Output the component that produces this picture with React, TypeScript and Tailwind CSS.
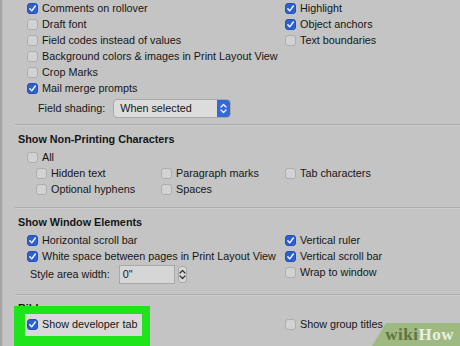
import React from 'react';

type Box = { label: string; on?: boolean };

const Check: React.FC<{ on?: boolean }> = ({ on }) =>
  on ? (
    <span className="w-[11px] h-[11px] shrink-0 rounded-[3px] bg-[#2c60cf] border border-[#2350b4] flex items-center justify-center">
      <svg width="9" height="9" viewBox="0 0 10 10">
        <path d="M2 5.3 L4.1 7.6 L8.2 2.2" fill="none" stroke="#fff" strokeWidth="1.5" strokeLinecap="round" strokeLinejoin="round" />
      </svg>
    </span>
  ) : (
    <span className="w-[11px] h-[11px] shrink-0 rounded-[3px] bg-[#d2d2d2] border border-[#aeaeae]" />
  );

const Row: React.FC<Box> = ({ label, on }) => (
  <div className="h-4 flex items-center gap-[4px] whitespace-nowrap">
    <Check on={on} />
    <span>{label}</span>
  </div>
);

const Divider: React.FC = () => (
  <div className="ml-[12px] h-[2px] border-t border-[#adadad] border-b border-b-[#cdcdcd]" />
);

const Heading: React.FC<{ children: React.ReactNode }> = ({ children }) => (
  <div className="h-4 pl-[15px] flex items-center font-bold">{children}</div>
);

const Stepper: React.FC<{ blue?: boolean }> = ({ blue }) => (
  <svg width="7" height="11" viewBox="0 0 7 11">
    <path d="M1 4 L3.5 1.5 L6 4 M1 7 L3.5 9.5 L6 7" fill="none" stroke={blue ? '#fff' : '#333'} strokeWidth="1.2" strokeLinecap="round" strokeLinejoin="round" />
  </svg>
);

export default function App() {
  const viewLeft: Box[] = [
    { label: 'Comments on rollover', on: true },
    { label: 'Draft font' },
    { label: 'Field codes instead of values' },
    { label: 'Background colors & images in Print Layout View' },
    { label: 'Crop Marks' },
    { label: 'Mail merge prompts', on: true },
  ];
  const viewRight: Box[] = [
    { label: 'Highlight', on: true },
    { label: 'Object anchors', on: true },
    { label: 'Text boundaries' },
  ];

  return (
    <div
      className="relative w-[460px] h-[346px] overflow-hidden flex bg-[#c4c4c4] text-[#161616] text-[10.8px]"
      style={{ fontFamily: '"Liberation Sans", Arial, sans-serif' }}
    >
      <div className="w-[3px] shrink-0 border-l-2 border-[#a4a4a4] bg-[#b8b8b8]" />

      {/* highlight frame: covers the Ribbon heading, sits under the row */}
      <div className="absolute z-[1] left-[14px] top-[306px] w-[136px] h-[48px] bg-[#1fe41b] pt-[8px] pl-[11px]">
        <div className="w-[117px] h-[22px] bg-[#d9d9d9]" />
      </div>

      <div className="relative flex-1 flex flex-col">
        {/* View */}
        <div className="flex pl-[24px]">
          <div className="w-[258px] flex flex-col">
            {viewLeft.map((b) => (
              <Row key={b.label} {...b} />
            ))}
            <div className="mt-[3px] h-[19px] pl-[11px] flex items-center gap-[8px]">
              <span>Field shading:</span>
              <div className="w-[118px] h-[19px] flex items-center justify-between rounded-[4px] bg-[#dcdcdc] border border-[#a8a8a8] pl-[6px]">
                <span>When selected</span>
                <span className="w-[13px] h-[17px] rounded-r-[3px] bg-[#356ad6] flex items-center justify-center">
                  <Stepper blue />
                </span>
              </div>
            </div>
          </div>
          <div className="flex flex-col">
            {viewRight.map((b) => (
              <Row key={b.label} {...b} />
            ))}
          </div>
        </div>

        <div className="mt-[6px]">
          <Divider />
        </div>

        {/* Non-printing */}
        <div className="mt-[5px]">
          <Heading>Show Non-Printing Characters</Heading>
        </div>
        <div className="mt-[2px] pl-[24px]">
          <Row label="All" />
        </div>
        <div className="grid grid-cols-[125px_124px_1fr] pl-[33px]">
          <Row label="Hidden text" />
          <Row label="Paragraph marks" />
          <Row label="Tab characters" />
          <Row label="Optional hyphens" />
          <Row label="Spaces" />
        </div>

        <div className="mt-[10px]">
          <Divider />
        </div>

        {/* Window elements */}
        <div className="mt-[5px]">
          <Heading>Show Window Elements</Heading>
        </div>
        <div className="mt-[2px] flex pl-[24px]">
          <div className="w-[258px] flex flex-col">
            <Row label="Horizontal scroll bar" on />
            <Row label="White space between pages in Print Layout View" on />
            <div className="mt-[1px] h-[19px] pl-[3px] flex items-center">
              <span>Style area width:</span>
              <div className="ml-[9px] w-[56px] h-[19px] border border-[#a8a8a8] bg-[#d6d6d6] pl-[3px] flex items-center">
                0"
              </div>
              <div className="ml-[3px] w-[9px] h-[17px] rounded-[3px] border border-[#a8a8a8] bg-[#d8d8d8] flex items-center justify-center">
                <Stepper />
              </div>
            </div>
          </div>
          <div className="flex flex-col">
            <Row label="Vertical ruler" on />
            <Row label="Vertical scroll bar" on />
            <Row label="Wrap to window" />
          </div>
        </div>

        <div className="mt-[10px]">
          <Divider />
        </div>

        {/* Ribbon */}
        <div className="mt-[4px]">
          <Heading>Ribbon</Heading>
        </div>
        <div className="relative z-[2] flex pl-[24px]">
          <div className="w-[258px]">
            <Row label="Show developer tab" on />
          </div>
          <Row label="Show group titles" />
        </div>
      </div>

      {/* watermark */}
      <div
        className="absolute z-[3] right-0 bottom-0 w-[88px] h-[23px] bg-[#9db97f] opacity-95 flex items-center justify-end pr-[6px]"
        style={{ clipPath: 'polygon(14px 0, 100% 0, 100% 100%, 0 100%)' }}
      >
        <span className="font-bold text-[17px] leading-none tracking-[0.5px]" style={{ fontFamily: '"Liberation Serif", serif' }}>
          <span className="text-[#5d6f3c]">wiki</span>
          <span className="text-[#eef2e4]">How</span>
        </span>
      </div>
    </div>
  );
}
